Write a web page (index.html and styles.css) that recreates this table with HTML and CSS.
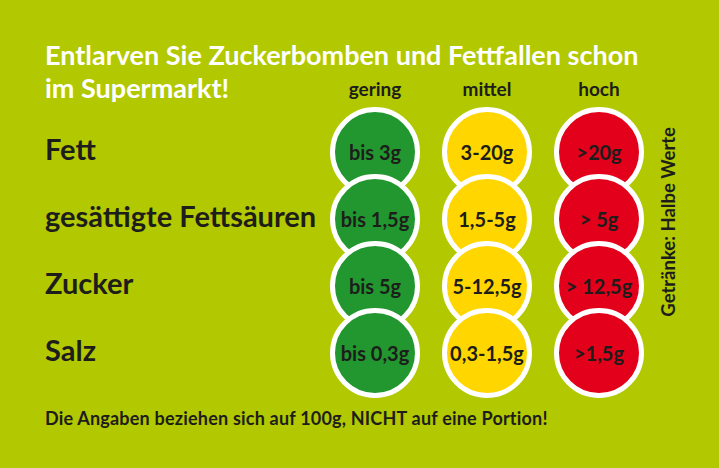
FILE: index.html
```html
<!DOCTYPE html>
<html lang="de">
<head>
<meta charset="utf-8">
<title>Ampel</title>
<link rel="stylesheet" href="styles.css">
</head>
<body>
<main class="card">
  <div class="grid">
    <h1 class="title">Entlarven Sie Zuckerbomben und Fettfallen schon<br>im Supermarkt!</h1>
    <div class="head c1">gering</div>
    <div class="head c2">mittel</div>
    <div class="head c3">hoch</div>

    <div class="label r1">Fett</div>
    <div class="dot green c1 r1">bis 3g</div>
    <div class="dot yellow c2 r1">3-20g</div>
    <div class="dot red c3 r1">&gt;20g</div>

    <div class="label r2">gesättigte Fettsäuren</div>
    <div class="dot green c1 r2">bis 1,5g</div>
    <div class="dot yellow c2 r2">1,5-5g</div>
    <div class="dot red c3 r2">&gt; 5g</div>

    <div class="label r3">Zucker</div>
    <div class="dot green c1 r3">bis 5g</div>
    <div class="dot yellow c2 r3">5-12,5g</div>
    <div class="dot red c3 r3">&gt; 12,5g</div>

    <div class="label r4">Salz</div>
    <div class="dot green c1 r4">bis 0,3g</div>
    <div class="dot yellow c2 r4">0,3-1,5g</div>
    <div class="dot red c3 r4">&gt;1,5g</div>

    <div class="side">Getränke: Halbe Werte</div>
  </div>
  <p class="note">Die Angaben beziehen sich auf 100g, NICHT auf eine Portion!</p>
</main>
</body>
</html>
```
FILE: styles.css
```css
* { box-sizing: border-box; }
html, body { margin: 0; padding: 0; }
body {
  width: 719px;
  height: 468px;
  overflow: hidden;
  font-family: Lato, "Liberation Sans", sans-serif;
  color: #1d1d1b;
}
.card {
  width: 719px;
  height: 468px;
  background: #b2c800;
  padding: 38px 0 0 45px;
}
.grid {
  display: grid;
  grid-template-columns: 263px 90px 90px 90px 24px;
  grid-template-rows: 33px 47px repeat(4, 67px);
  column-gap: 22px;
}
.title {
  grid-column: 1 / -1;
  grid-row: 1 / 3;
  margin: 0;
  font-size: 27px;
  line-height: 33px;
  font-weight: 700;
  color: #ffffff;
  white-space: nowrap;
}
.head {
  grid-row: 2;
  align-self: start;
  text-align: center;
  font-size: 19px;
  font-weight: 700;
  line-height: 35px;
}
.c1 { grid-column: 2; }
.c2 { grid-column: 3; }
.c3 { grid-column: 4; }
.r1 { grid-row: 3; }
.r2 { grid-row: 4; }
.r3 { grid-row: 5; }
.r4 { grid-row: 6; }
.label {
  grid-column: 1;
  align-self: center;
  padding-bottom: 5px;
  font-size: 29px;
  font-weight: 700;
  line-height: 34px;
  white-space: nowrap;
}
.dot {
  width: 90px;
  height: 90px;
  margin: -11.5px 0;
  border: 5px solid #ffffff;
  border-radius: 50%;
  display: flex;
  align-items: center;
  justify-content: center;
  font-size: 20px;
  font-weight: 700;
  white-space: nowrap;
}
.green { background: #22962f; }
.yellow { background: #ffd600; }
.red { background: #e2001a; }
.side {
  grid-column: 5;
  grid-row: 3 / 7;
  align-self: start;
  justify-self: start;
  margin: 9px 0 0 -10px;
  writing-mode: vertical-rl;
  transform: rotate(180deg);
  font-size: 18.5px;
  font-weight: 700;
  line-height: 24px;
  white-space: nowrap;
}
.note {
  margin: 20px 0 0;
  font-size: 18px;
  letter-spacing: 0.2px;
  font-weight: 700;
  line-height: 24px;
}
```
